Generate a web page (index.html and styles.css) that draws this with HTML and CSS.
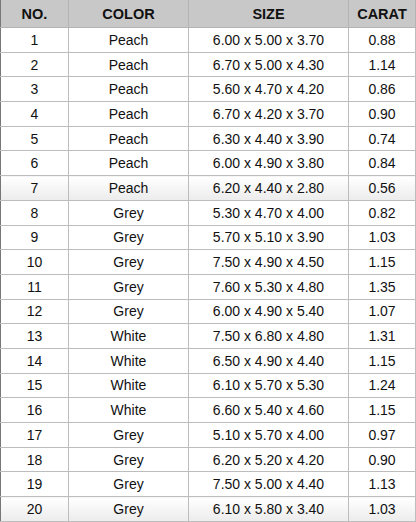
FILE: index.html
```html
<!DOCTYPE html>
<html>
<head>
<meta charset="utf-8">
<link rel="stylesheet" href="styles.css">
</head>
<body>
<table class="stones">
  <colgroup>
    <col class="c-no"><col class="c-color"><col class="c-size"><col class="c-carat">
  </colgroup>
  <thead>
    <tr><th>NO.</th><th>COLOR</th><th>SIZE</th><th>CARAT</th></tr>
  </thead>
  <tbody>
    <tr><td>1</td><td>Peach</td><td>6.00 x 5.00 x 3.70</td><td>0.88</td></tr>
    <tr><td>2</td><td>Peach</td><td>6.70 x 5.00 x 4.30</td><td>1.14</td></tr>
    <tr><td>3</td><td>Peach</td><td>5.60 x 4.70 x 4.20</td><td>0.86</td></tr>
    <tr><td>4</td><td>Peach</td><td>6.70 x 4.20 x 3.70</td><td>0.90</td></tr>
    <tr><td>5</td><td>Peach</td><td>6.30 x 4.40 x 3.90</td><td>0.74</td></tr>
    <tr><td>6</td><td>Peach</td><td>6.00 x 4.90 x 3.80</td><td>0.84</td></tr>
    <tr class="shade"><td>7</td><td>Peach</td><td>6.20 x 4.40 x 2.80</td><td>0.56</td></tr>
    <tr><td>8</td><td>Grey</td><td>5.30 x 4.70 x 4.00</td><td>0.82</td></tr>
    <tr><td>9</td><td>Grey</td><td>5.70 x 5.10 x 3.90</td><td>1.03</td></tr>
    <tr><td>10</td><td>Grey</td><td>7.50 x 4.90 x 4.50</td><td>1.15</td></tr>
    <tr><td>11</td><td>Grey</td><td>7.60 x 5.30 x 4.80</td><td>1.35</td></tr>
    <tr><td>12</td><td>Grey</td><td>6.00 x 4.90 x 5.40</td><td>1.07</td></tr>
    <tr><td>13</td><td>White</td><td>7.50 x 6.80 x 4.80</td><td>1.31</td></tr>
    <tr><td>14</td><td>White</td><td>6.50 x 4.90 x 4.40</td><td>1.15</td></tr>
    <tr><td>15</td><td>White</td><td>6.10 x 5.70 x 5.30</td><td>1.24</td></tr>
    <tr><td>16</td><td>White</td><td>6.60 x 5.40 x 4.60</td><td>1.15</td></tr>
    <tr><td>17</td><td>Grey</td><td>5.10 x 5.70 x 4.00</td><td>0.97</td></tr>
    <tr><td>18</td><td>Grey</td><td>6.20 x 5.20 x 4.20</td><td>0.90</td></tr>
    <tr><td>19</td><td>Grey</td><td>7.50 x 5.00 x 4.40</td><td>1.13</td></tr>
    <tr class="shade"><td>20</td><td>Grey</td><td>6.10 x 5.80 x 3.40</td><td>1.03</td></tr>
  </tbody>
</table>
</body>
</html>
```

FILE: styles.css
```css
html, body {
  margin: 0;
  padding: 0;
  background: #ffffff;
}

.stones {
  border-collapse: collapse;
  table-layout: fixed;
  width: 415px;
  font-family: "Liberation Sans", Arial, sans-serif;
  color: #111;
}

.c-no { width: 68px; }
.c-color { width: 120px; }
.c-size { width: 160px; }
.c-carat { width: 67px; }

.stones th {
  height: 27px;
  padding: 0;
  background: #c8c8c8;
  font-size: 14.5px;
  font-weight: bold;
  text-align: center;
  border: 1px solid #b4b4b4;
  border-top: none;
}

.stones td {
  height: 23.7px;
  padding: 0;
  font-size: 14px;
  text-align: center;
  border: 1px solid #bdbdbd;
}

.stones td:first-child,
.stones th:first-child {
  border-left: 1px solid #777;
}

.stones tr.shade td {
  background: linear-gradient(#ffffff, #ececec);
}
```
